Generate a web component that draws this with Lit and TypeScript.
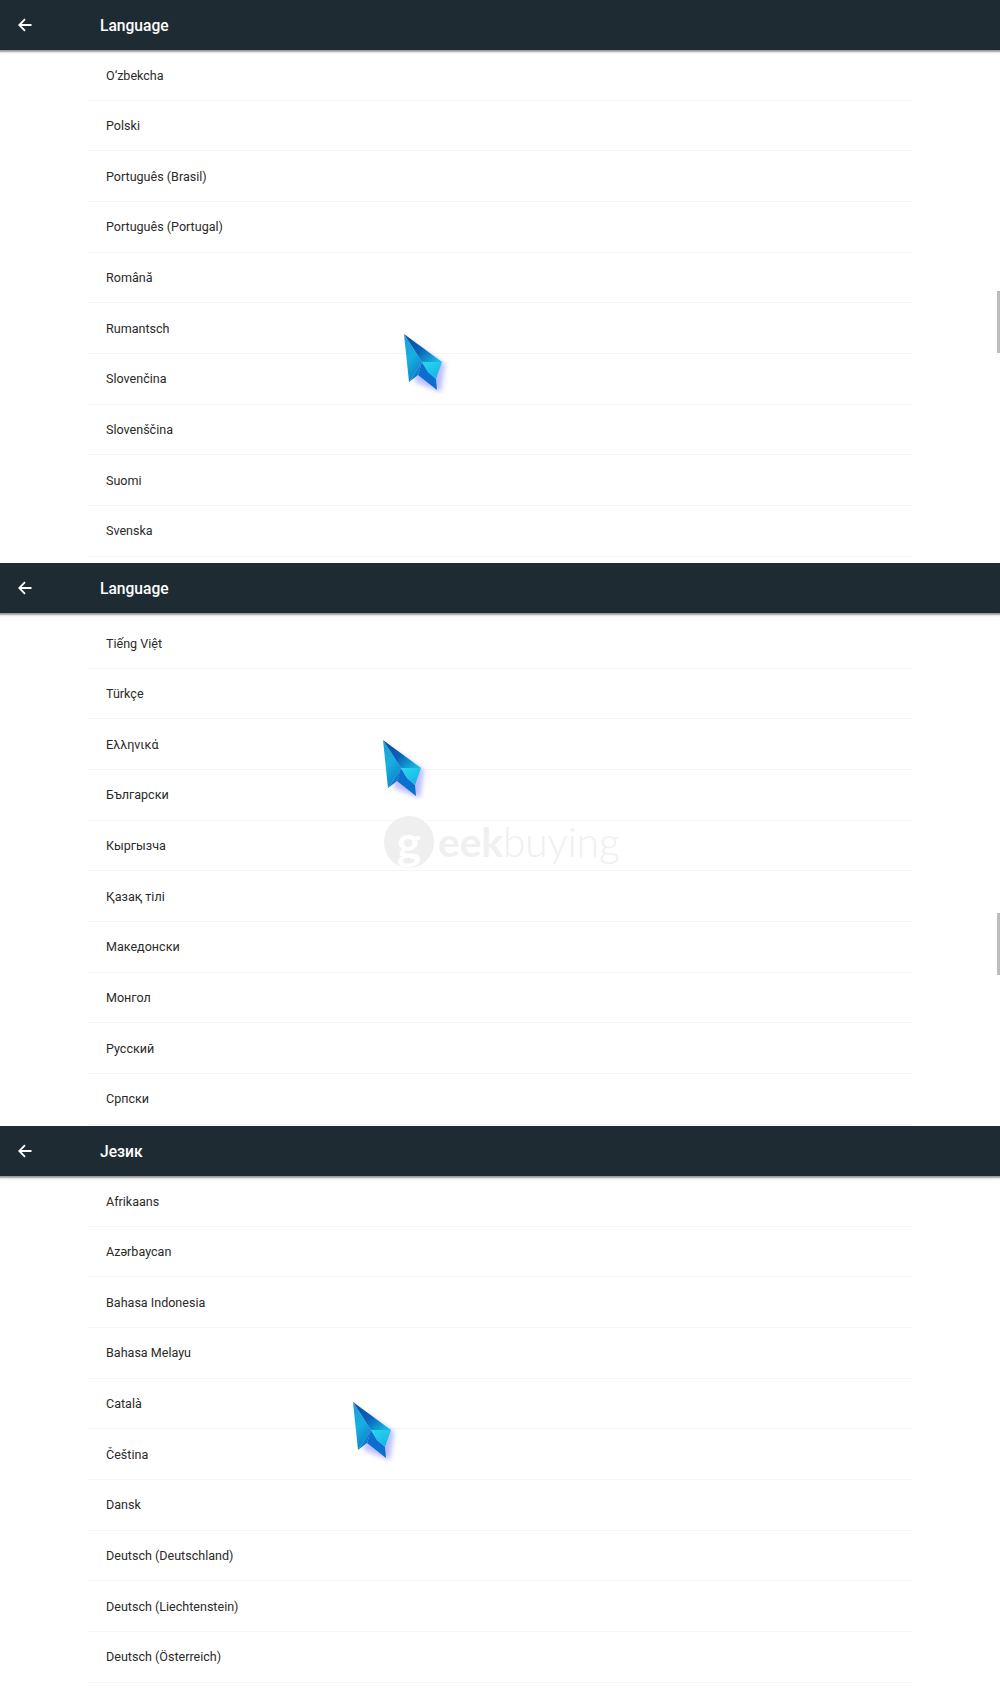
import { LitElement, html, css, svg } from "lit";
import { customElement } from "lit/decorators.js";

const sections = [
  { title: "Language", cls: "s1", items: ["O‘zbekcha", "Polski", "Português (Brasil)", "Português (Portugal)", "Română", "Rumantsch", "Slovenčina", "Slovenščina", "Suomi", "Svenska"], cursor: "c1", bar: "b1", mark: false },
  { title: "Language", cls: "s2", items: ["Tiếng Việt", "Türkçe", "Ελληνικά", "Български", "Кыргызча", "Қазақ тілі", "Македонски", "Монгол", "Русский", "Српски"], cursor: "c2", bar: "b2", mark: true },
  { title: "Језик", cls: "s3", items: ["Afrikaans", "Azərbaycan", "Bahasa Indonesia", "Bahasa Melayu", "Català", "Čeština", "Dansk", "Deutsch (Deutschland)", "Deutsch (Liechtenstein)", "Deutsch (Österreich)"], cursor: "c3", bar: "", mark: false },
];

const arrow = svg`<svg class="back" viewBox="0 0 16 16" width="16" height="16"><path d="M14.5 8H2.5M8 2.2 2.3 8 8 13.8" fill="none" stroke="#fff" stroke-width="1.8"/></svg>`;

const pointer = svg`<svg viewBox="0 0 50 64" width="50" height="64">
  <defs>
    <linearGradient id="lf" x1="0" y1="0" x2="0.4" y2="1"><stop offset="0" stop-color="#1c9bd6"/><stop offset="0.55" stop-color="#17b0e0"/><stop offset="1" stop-color="#0d84cc"/></linearGradient>
    <linearGradient id="rt" x1="0" y1="0" x2="1" y2="0.8"><stop offset="0" stop-color="#0a4a9c"/><stop offset="0.55" stop-color="#0b62b8"/><stop offset="1" stop-color="#14b8e2"/></linearGradient>
    <linearGradient id="lr" x1="0" y1="0" x2="0.7" y2="1"><stop offset="0" stop-color="#2ad8ee"/><stop offset="1" stop-color="#15b4e6"/></linearGradient>
    <filter id="sh" x="-30%" y="-30%" width="170%" height="170%"><feGaussianBlur stdDeviation="2.6"/></filter>
  </defs>
  <polygon points="12,12 42,32 38,60 12,50" fill="#7a7cff" opacity="0.5" filter="url(#sh)" transform="translate(3 2)"/>
  <polygon points="4,4 22,32 9,52" fill="url(#lf)"/>
  <polygon points="4,4 42,32 22,32" fill="url(#rt)"/>
  <polygon points="22,32 18,45 9,52 22,32" fill="#0d7fca"/>
  <polygon points="22,32 28,42 36,49 37,60 18,45" fill="#0a6fce"/>
  <polygon points="22,32 42,32 36,49 28,42" fill="url(#lr)"/>
</svg>`;

@customElement("app-root")
export class AppRoot extends LitElement {
  static styles = css`
    :host { display: block; width: 1000px; background: #fff; font-family: Roboto, "Noto Sans", sans-serif; }
    .section { position: relative; height: 563px; overflow: hidden; background: #fff; display: flex; flex-direction: column; }
    .header {
      flex: none; height: 50px; background: #1f2b33; display: flex; align-items: center;
      position: relative; z-index: 1; box-shadow: 0 1px 0 #9c9c9c, 0 2px 1px #b5b5b5, 0 3px 2px #e6e6e6;
    }
    .back { flex: none; margin-left: 17px; }
    .title { margin-left: 67px; margin-top: 1px; color: #fff; font-size: 15.6px; font-weight: 500; }
    .list { flex: none; margin: 0 88px; display: flex; flex-direction: column; }
    .s1 .list, .s3 .list { margin-top: 0.2px; }
    .s2 .list { margin-top: 5.2px; }
    .row {
      height: 50.65px; box-sizing: border-box; border-bottom: 1px solid #f6f6f6;
      display: flex; align-items: center; padding-left: 18px; color: #2a2a2a; font-size: 12.55px;
    }
    .cursor { position: absolute; line-height: 0; }
    .c1 { left: 400px; top: 330px; }
    .c2 { left: 379px; top: 173px; }
    .c3 { left: 349px; top: 272px; }
    .bar { position: absolute; left: 997px; width: 3px; height: 62px; background: #bdbdbd; }
    .b1 { top: 291px; }
    .b2 { top: 350px; }
    .mark {
      position: absolute; left: 384px; top: 252px; display: flex; align-items: center; gap: 4px;
      color: #f0f0f0; font-family: Lato, sans-serif; font-size: 40.5px; line-height: 54px;
    }
    .disc {
      width: 50px; height: 52px; border-radius: 50%; background: #efefef; color: #fff;
      display: flex; align-items: center; justify-content: center; font-weight: 700; font-size: 46px; line-height: 1;
    }
    .word { display: flex; }
    .eek { font-weight: 700; }
    .buying { font-weight: 300; }
  `;

  render() {
    return sections.map(
      (s) => html`<section class="section ${s.cls}">
        <div class="header">${arrow}<span class="title">${s.title}</span></div>
        <div class="list">${s.items.map((i) => html`<div class="row">${i}</div>`)}</div>
        ${s.mark
          ? html`<div class="mark"><span class="disc">g</span><span class="word"><span class="eek">eek</span><span class="buying">buying</span></span></div>`
          : ""}
        <div class="cursor ${s.cursor}">${pointer}</div>
        ${s.bar ? html`<div class="bar ${s.bar}"></div>` : ""}
      </section>`
    );
  }
}
